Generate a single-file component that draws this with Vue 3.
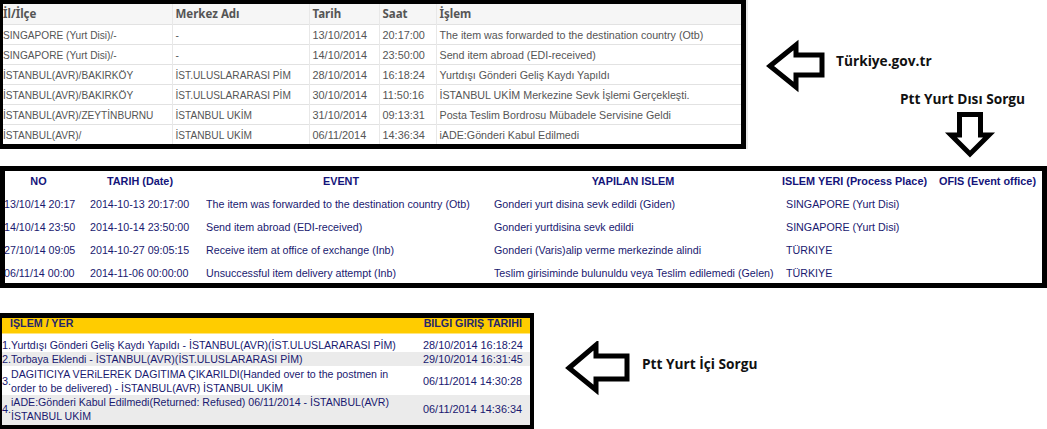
<script setup>
const gov = [
  ['SINGAPORE (Yurt Disi)/-', '-', '13/10/2014', '20:17:00', 'The item was forwarded to the destination country (Otb)'],
  ['SINGAPORE (Yurt Disi)/-', '-', '14/10/2014', '23:50:00', 'Send item abroad (EDI-received)'],
  ['İSTANBUL(AVR)/BAKIRKÖY', 'İST.ULUSLARARASI PİM', '28/10/2014', '16:18:24', 'Yurtdışı Gönderi Geliş Kaydı Yapıldı'],
  ['İSTANBUL(AVR)/BAKIRKÖY', 'İST.ULUSLARARASI PİM', '30/10/2014', '11:50:16', 'İSTANBUL UKİM Merkezine Sevk İşlemi Gerçekleşti.'],
  ['İSTANBUL(AVR)/ZEYTİNBURNU', 'İSTANBUL UKİM', '31/10/2014', '09:13:31', 'Posta Teslim Bordrosu Mübadele Servisine Geldi'],
  ['İSTANBUL(AVR)/', 'İSTANBUL UKİM', '06/11/2014', '14:36:34', 'iADE:Gönderi Kabul Edilmedi'],
]
const abroad = [
  ['13/10/14 20:17', '2014-10-13 20:17:00', 'The item was forwarded to the destination country (Otb)', 'Gonderi yurt disina sevk edildi (Giden)', 'SINGAPORE (Yurt Disi)'],
  ['14/10/14 23:50', '2014-10-14 23:50:00', 'Send item abroad (EDI-received)', 'Gonderi yurtdisina sevk edildi', 'SINGAPORE (Yurt Disi)'],
  ['27/10/14 09:05', '2014-10-27 09:05:15', 'Receive item at office of exchange (Inb)', 'Gonderi (Varis)alip verme merkezinde alindi', 'TÜRKIYE'],
  ['06/11/14 00:00', '2014-11-06 00:00:00', 'Unsuccessful item delivery attempt (Inb)', 'Teslim girisiminde bulunuldu veya Teslim edilemedi (Gelen)', 'TÜRKIYE'],
]
const domestic = [
  ['1.', 'Yurtdışı Gönderi Geliş Kaydı Yapıldı - İSTANBUL(AVR)(İST.ULUSLARARASI PİM)', '28/10/2014 16:18:24', 'r1'],
  ['2.', 'Torbaya Eklendi - İSTANBUL(AVR)(İST.ULUSLARARASI PİM)', '29/10/2014 16:31:45', 'r2 alt'],
  ['3.', 'DAGITICIYA VERiLEREK DAGITIMA ÇIKARILDI(Handed over to the postmen in order to be delivered) - İSTANBUL(AVR) İSTANBUL UKİM', '06/11/2014 14:30:28', 'r3'],
  ['4.', 'iADE:Gönderi Kabul Edilmedi(Returned: Refused) 06/11/2014 - İSTANBUL(AVR) İSTANBUL UKİM', '06/11/2014 14:36:34', 'r4 alt'],
]
</script>

<template>
  <div class="page">
    <section class="panel gov">
      <table>
        <colgroup>
          <col style="width:169px" /><col style="width:137px" /><col style="width:70px" /><col style="width:57px" /><col />
        </colgroup>
        <thead>
          <tr><th>İl/İlçe</th><th>Merkez Adı</th><th>Tarih</th><th>Saat</th><th>İşlem</th></tr>
        </thead>
        <tbody>
          <tr v-for="(row, i) in gov" :key="i"><td v-for="(c, j) in row" :key="j">{{ c }}</td></tr>
        </tbody>
      </table>
    </section>

    <section class="panel abroad">
      <table>
        <colgroup>
          <col style="width:85px" /><col style="width:116px" /><col style="width:288px" /><col style="width:288px" /><col style="width:153px" /><col />
        </colgroup>
        <thead>
          <tr><th>NO</th><th>TARIH (Date)</th><th>EVENT</th><th>YAPILAN ISLEM</th><th class="place">ISLEM YERI (Process Place)</th><th class="office">OFIS (Event office)</th></tr>
        </thead>
        <tbody>
          <tr v-for="(row, i) in abroad" :key="i">
            <td v-for="(c, j) in row" :key="j">{{ c }}</td><td></td>
          </tr>
        </tbody>
      </table>
    </section>

    <section class="panel domestic">
      <div class="dom-head"><span>IŞLEM / YER</span><span>BILGI GIRIŞ TARIHI</span></div>
      <div v-for="row in domestic" :key="row[0]" class="dom-row" :class="row[3]">
        <span class="num">{{ row[0] }}</span>
        <span class="txt">{{ row[1] }}</span>
        <span class="when">{{ row[2] }}</span>
      </div>
    </section>

    <svg class="arrow a1" width="70" height="60" viewBox="0 0 70 60">
      <path d="M5 27 L31 6 V16 H57 V36 H31 V48 Z" />
    </svg>
    <span class="label l1">Türkiye.gov.tr</span>

    <span class="label l2">Ptt Yurt Dısı Sorgu</span>
    <svg class="arrow a2" width="60" height="60" viewBox="0 0 60 60">
      <path d="M21.5 4.5 H42.5 V25 H51 L32 44 L13 25 H21.5 Z" />
    </svg>

    <svg class="arrow a3" width="70" height="60" viewBox="0 0 70 60">
      <path d="M6 27 L33 4 V15 H64 V38 H33 V49 Z" />
    </svg>
    <span class="label l3">Ptt Yurt İçi Sorgu</span>
  </div>
</template>

<style>
html, body { margin: 0; background: #fff; overflow: hidden; }
</style>

<style scoped>
.page {
  position: relative;
  width: 1047px;
  height: 429px;
  overflow: hidden;
  background: #fff;
}
.panel {
  box-sizing: border-box;
  border: 5px solid #000;
  background: #fff;
  overflow: hidden;
}
table { border-collapse: collapse; table-layout: fixed; width: 100%; }
th, td { padding: 0; white-space: nowrap; overflow: hidden; }

/* Türkiye.gov.tr */
.gov {
  width: 746px;
  height: 149px;
  border-width: 4px 5px 5px 3px;
  font: 10.9px/21px "Liberation Sans", sans-serif;
  color: #555;
  box-shadow: 2px 0 0 #e8e8e8;
}
.gov tr { height: 20px; border-bottom: 1px solid #e2e2e2; }
.gov tbody tr:last-child { border-bottom: 0; }
.gov thead tr { background: #f6f6f6; }
.gov th {
  font: 700 11.5px/21px "Noto Sans", sans-serif;
  text-align: left;
  color: #555;
}
.gov th, .gov td { padding-left: 3px; border-right: 1px solid #e8e8e8; box-sizing: border-box; height: 20px; padding-top: 0; padding-bottom: 0; line-height: 19px; vertical-align: top; }
.gov td { padding-top: 2px; line-height: 17px; }
.gov td:nth-child(1), .gov td:nth-child(2) { font-size: 10.15px; }
.gov td:nth-child(5) { font-size: 10.7px; }
.gov th:first-child, .gov td:first-child { padding-left: 0; }
.gov th:last-child, .gov td:last-child { border-right: 0; }

/* Ptt Yurt Dışı */
.abroad {
  width: 1047px;
  height: 122px;
  margin-top: 17px;
  font: 10.7px/23px "Liberation Sans", Arial, sans-serif;
  color: #191970;
}
.abroad table { margin-top: -1px; }
.abroad tr { height: 23px; }
.abroad thead tr { height: 21px; }
.abroad th { font-weight: 700; font-size: 10.85px; text-align: center; color: #14147a; }
.abroad th:nth-child(1) { padding-right: 18px; }
.abroad th:nth-child(2) { padding-right: 16px; }
.abroad th:nth-child(3) { padding-right: 18px; }
.abroad th:nth-child(4) { padding-right: 10px; }
.abroad th.place { text-align: left; }
.abroad th.office { text-align: left; padding-left: 4px; }
.abroad td:nth-child(5) { padding-left: 4px; }
.abroad td:first-child { text-indent: -1px; }

/* Ptt Yurt İçi */
.domestic {
  width: 534px;
  height: 116px;
  margin-top: 25px;
  border-width: 5px 4px 4px 2px;
  font: 10.9px/14px "Liberation Sans", Arial, sans-serif;
  color: #191970;
}
.dom-head {
  display: flex;
  justify-content: space-between;
  height: 15px;
  line-height: 11px;
  padding: 0 8px;
  background: #ffcc00;
  border-bottom: 1px solid #ffe680;
  margin-bottom: 4px;
  font-weight: 700;
  font-size: 10.7px;
  color: #27276b;
}
.dom-row {
  display: grid;
  grid-template-columns: 9px 412px 1fr;
  align-items: center;
}
.dom-row.alt { background: #ebebeb; }
.r1 { height: 14px; }
.r2 { height: 14px; }
.r3 { height: 29px; }
.r4 { height: 31px; box-sizing: border-box; padding-bottom: 3px; }
.txt { padding-right: 16px; font-size: 10.6px; }

/* annotations on the image */
.arrow { position: absolute; }
.arrow path { fill: #fff; stroke: #000; stroke-width: 5; stroke-linejoin: miter; }
.a1 { left: 765px; top: 39px; }
.a2 { left: 938px; top: 110px; }
.a3 { left: 563px; top: 341px; }
.label {
  position: absolute;
  font: 700 13.7px/16px "Open Sans", sans-serif;
  color: #111;
  white-space: nowrap;
}
.l1 { left: 836px; top: 53px; }
.l2 { left: 900px; top: 91px; }
.l3 { left: 642px; top: 356px; }
</style>
